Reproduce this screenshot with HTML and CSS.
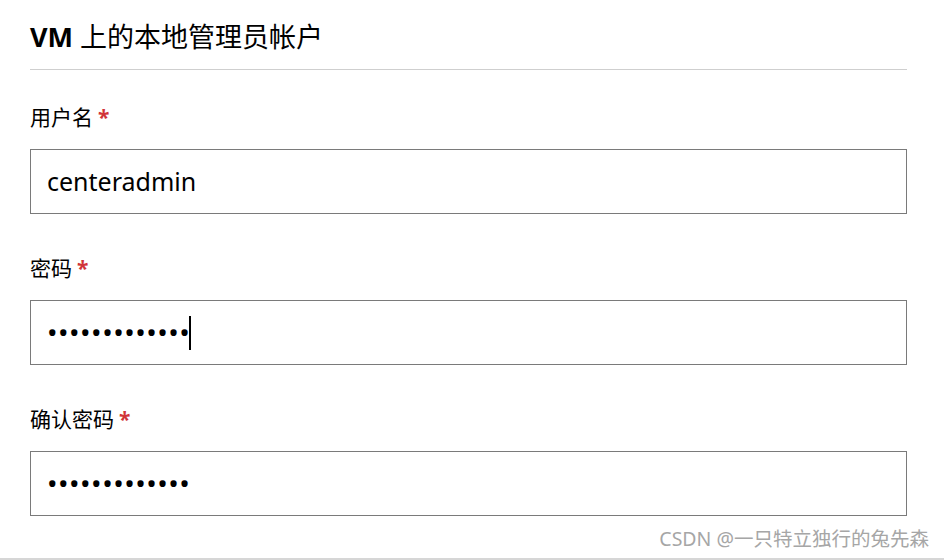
FILE: index.html
```html
<!DOCTYPE html>
<html>
    <head>
        <meta charset="utf-8">
        <title>VM 上的本地管理员帐户</title>
        <link rel="stylesheet" href="styles.css">
    </head>
    <body>
        <div class="panel">
            <h2 class="section-title"><b>VM</b> 上的本地管理员帐户</h2>

            <div class="field">
                <label class="field-label">用户名<span class="req">*</span></label>
                <div class="field-box">centeradmin</div>
            </div>

            <div class="field">
                <label class="field-label">密码<span class="req">*</span></label>
                <div class="field-box dots">•••••••••••••<span class="caret"></span></div>
            </div>

            <div class="field">
                <label class="field-label">确认密码<span class="req">*</span></label>
                <div class="field-box dots">•••••••••••••</div>
            </div>
        </div>

        <div class="watermark">CSDN @一只特立独行的兔先森</div>
    </body>
</html>
```

FILE: styles.css
```css
html, body {
    margin: 0;
    padding: 0;
}
body {
    background-color: white;
    font-family: "Noto Sans", "Noto Sans CJK SC", sans-serif;
    color: #000;
    width: 944px;
    height: 560px;
    position: relative;
    overflow: hidden;
    border-bottom: 2px solid #d6d6d6;
    box-sizing: border-box;
}
.panel {
    padding: 0 37px 0 30px;
    display: flex;
    flex-direction: column;
}
.section-title {
    margin: 0;
    padding-top: 18px;
    padding-bottom: 14px;
    font-size: 27px;
    font-weight: normal;
    line-height: 37px;
    border-bottom: 1px solid #cfcfcf;
}
.section-title b {
    font-weight: bold;
}
.field {
    display: flex;
    flex-direction: column;
}
.field-label {
    font-size: 21px;
    line-height: 28px;
    margin-top: 40px;
    margin-bottom: 18px;
}
.field:first-of-type .field-label {
    margin-top: 33px;
}
.req {
    color: #d13438;
    font-weight: bold;
    margin-left: 5px;
}
.field-box {
    height: 63px;
    border: 1px solid #7a7a7a;
    padding: 0 16px;
    font-size: 25px;
    line-height: 63px;
    display: flex;
    align-items: center;
}
.dots {
    letter-spacing: 0.5px;
    font-size: 28px;
}
.caret {
    display: inline-block;
    width: 2px;
    height: 34px;
    background: #000;
    margin-left: -1px;
}
.watermark {
    position: absolute;
    right: 15px;
    bottom: 6px;
    font-size: 19.5px;
    color: #a6a6a6;
}
```
